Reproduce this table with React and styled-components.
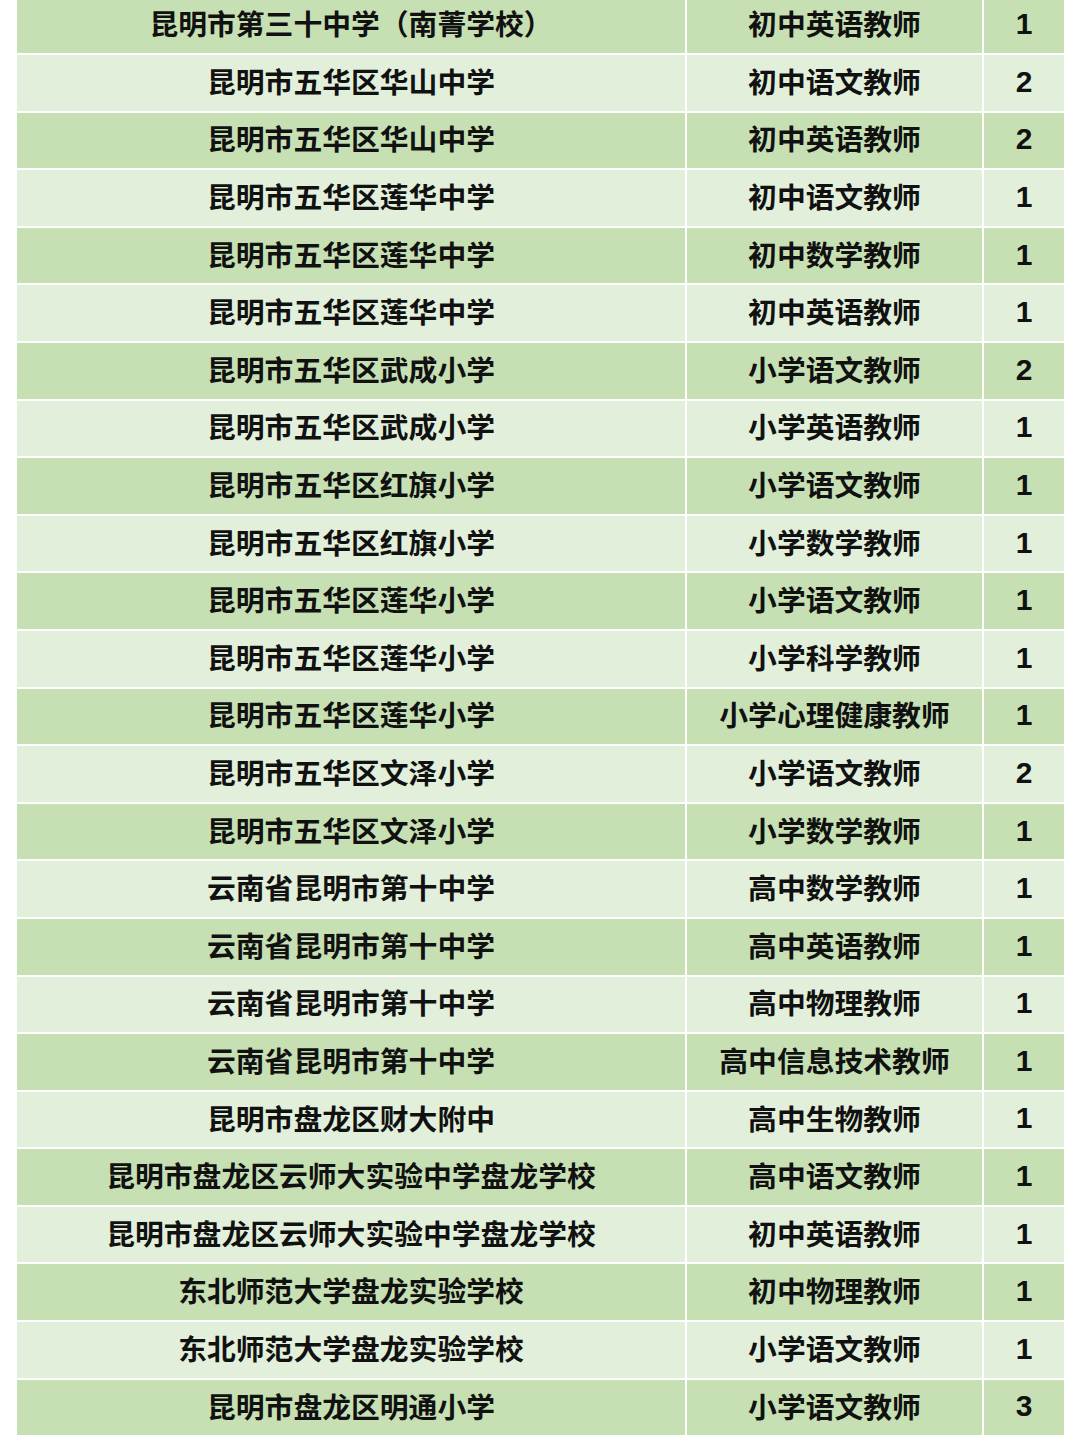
import React from 'react';
import styled, { createGlobalStyle } from 'styled-components';

const GlobalStyle = createGlobalStyle`
  body {
    margin: 0;
    background: #ffffff;
    font-family: "Noto Sans CJK SC", "Noto Sans", sans-serif;
  }
`;

const Table = styled.div`
  display: flex;
  flex-direction: column;
  gap: 2px;
  width: 1047px;
  margin: -2.6px 0 0 17px;
`;

const Row = styled.div`
  display: grid;
  grid-template-columns: 668px 295px 80px;
  gap: 2px;
  height: 55.6px;
`;

const Cell = styled.div`
  display: flex;
  align-items: center;
  justify-content: center;
  background: ${p => (p.$dark ? '#c6e0b4' : '#e2efda')};
  color: #111;
  font-family: "Noto Sans CJK SC", sans-serif;
  font-weight: 700;
  font-size: 28.8px;
  line-height: 1;
  padding-bottom: 3px;
  box-sizing: border-box;
  white-space: nowrap;
`;

const Count = styled(Cell)`
  font-family: "Liberation Sans", Arial, sans-serif;
  font-size: 30px;
  padding-bottom: 2px;
`;

const rows = [
  ['昆明市第三十中学（南菁学校）', '初中英语教师', 1],
  ['昆明市五华区华山中学', '初中语文教师', 2],
  ['昆明市五华区华山中学', '初中英语教师', 2],
  ['昆明市五华区莲华中学', '初中语文教师', 1],
  ['昆明市五华区莲华中学', '初中数学教师', 1],
  ['昆明市五华区莲华中学', '初中英语教师', 1],
  ['昆明市五华区武成小学', '小学语文教师', 2],
  ['昆明市五华区武成小学', '小学英语教师', 1],
  ['昆明市五华区红旗小学', '小学语文教师', 1],
  ['昆明市五华区红旗小学', '小学数学教师', 1],
  ['昆明市五华区莲华小学', '小学语文教师', 1],
  ['昆明市五华区莲华小学', '小学科学教师', 1],
  ['昆明市五华区莲华小学', '小学心理健康教师', 1],
  ['昆明市五华区文泽小学', '小学语文教师', 2],
  ['昆明市五华区文泽小学', '小学数学教师', 1],
  ['云南省昆明市第十中学', '高中数学教师', 1],
  ['云南省昆明市第十中学', '高中英语教师', 1],
  ['云南省昆明市第十中学', '高中物理教师', 1],
  ['云南省昆明市第十中学', '高中信息技术教师', 1],
  ['昆明市盘龙区财大附中', '高中生物教师', 1],
  ['昆明市盘龙区云师大实验中学盘龙学校', '高中语文教师', 1],
  ['昆明市盘龙区云师大实验中学盘龙学校', '初中英语教师', 1],
  ['东北师范大学盘龙实验学校', '初中物理教师', 1],
  ['东北师范大学盘龙实验学校', '小学语文教师', 1],
  ['昆明市盘龙区明通小学', '小学语文教师', 3],
];

export default function App() {
  return (
    <>
      <GlobalStyle />
      <Table>
        {rows.map(([school, post, count], i) => {
          const dark = i % 2 === 0;
          return (
            <Row key={i}>
              <Cell $dark={dark}>{school}</Cell>
              <Cell $dark={dark}>{post}</Cell>
              <Count $dark={dark}>{count}</Count>
            </Row>
          );
        })}
      </Table>
    </>
  );
}
